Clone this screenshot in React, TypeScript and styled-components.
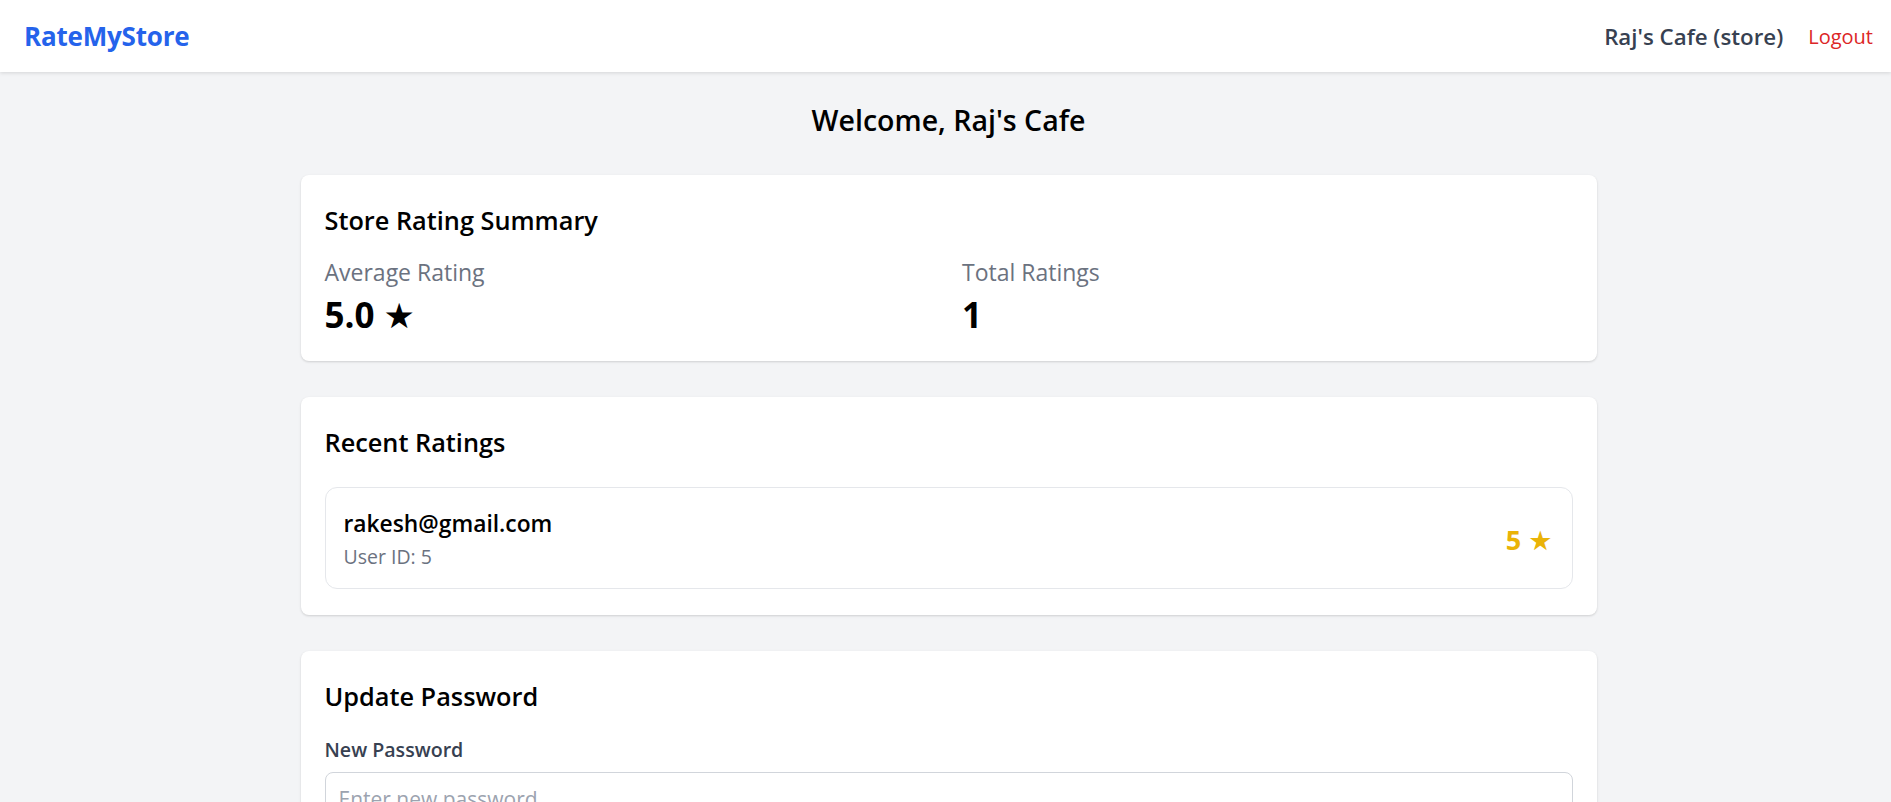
import React from "react";
import styled, { createGlobalStyle } from "styled-components";

const GlobalStyle = createGlobalStyle`
  * { box-sizing: border-box; }
  html, body { margin: 0; padding: 0; background: #f3f4f6; }
  body {
    font-family: "Open Sans", "Noto Sans", "DejaVu Sans", sans-serif;
    color: #000;
    -webkit-font-smoothing: antialiased;
  }
`;

const Nav = styled.header`
  height: 72px;
  background: #ffffff;
  display: flex;
  align-items: center;
  justify-content: space-between;
  padding: 0 18px 0 24px;
  box-shadow: 0 1px 4px rgba(0, 0, 0, 0.13);
  position: relative;
  z-index: 1;
`;

const Logo = styled.div`
  font-size: 26px;
  font-weight: 700;
  color: #2563eb;
  letter-spacing: -0.2px;
`;

const NavRight = styled.div`
  display: flex;
  align-items: center;
  gap: 25px;
`;

const NavUser = styled.span`
  font-size: 22.3px;
  font-weight: 600;
  color: #374151;
`;

const LogoutButton = styled.button`
  border: none;
  background: none;
  padding: 0;
  font-family: inherit;
  font-size: 20px;
  color: #dc2626;
  cursor: pointer;
`;

const Main = styled.main`
  padding: 29px 0 40px 6px;
`;

const PageTitle = styled.h1`
  margin: 0 0 36px;
  text-align: center;
  font-size: 28.5px;
  font-weight: 600;
  line-height: 38px;
  color: #000;
`;

const Container = styled.div`
  width: 1296px;
  margin: 0 auto;
  display: flex;
  flex-direction: column;
  gap: 36px;
`;

const Card = styled.section`
  background: #ffffff;
  border-radius: 8px;
  box-shadow: 0 1px 3px rgba(0, 0, 0, 0.1), 0 1px 2px rgba(0, 0, 0, 0.06);
  padding: 27px 24px 26px;
`;

const CardTitle = styled.h2<{ $gap: number }>`
  margin: 0 0 ${(p) => p.$gap}px;
  font-size: 25.3px;
  font-weight: 600;
  line-height: 36px;
  color: #000;
`;

const StatGrid = styled.div`
  display: grid;
  grid-template-columns: 1fr 1fr;
  column-gap: 27px;
`;

const Stat = styled.div`
  display: flex;
  flex-direction: column;
`;

const StatLabel = styled.span`
  font-size: 23px;
  line-height: 32px;
  color: #6b7280;
`;

const StatValue = styled.span`
  margin-top: 7px;
  font-size: 35px;
  font-weight: 700;
  line-height: 40px;
  color: #000;
`;

const RatingRow = styled.div`
  display: flex;
  align-items: center;
  justify-content: space-between;
  border: 1px solid #e5e7eb;
  border-radius: 12px;
  padding: 20px 19px 18px 18px;
`;

const RaterInfo = styled.div`
  display: flex;
  flex-direction: column;
`;

const RaterEmail = styled.span`
  font-size: 22.8px;
  font-weight: 600;
  line-height: 32px;
  color: #000;
`;

const RaterId = styled.span`
  margin-top: 4px;
  font-size: 19.5px;
  line-height: 26px;
  color: #6b7280;
`;

const RatingValue = styled.span`
  font-size: 27px;
  font-weight: 700;
  color: #eab308;
`;

const FormLabel = styled.label`
  display: block;
  margin-bottom: 9px;
  font-size: 19.6px;
  font-weight: 600;
  line-height: 27px;
  color: #374151;
`;

const TextInput = styled.input`
  display: block;
  width: 100%;
  height: 54px;
  border: 1px solid #d1d5db;
  border-radius: 8px;
  padding: 0 13px;
  font-family: inherit;
  font-size: 21px;
  color: #111827;
  background: #fff;
  outline: none;
  &::placeholder {
    color: #9ca3af;
  }
`;

export default function App() {
  return (
    <>
      <GlobalStyle />
      <Nav>
        <Logo>RateMyStore</Logo>
        <NavRight>
          <NavUser>Raj's Cafe (store)</NavUser>
          <LogoutButton>Logout</LogoutButton>
        </NavRight>
      </Nav>
      <Main>
        <PageTitle>Welcome, Raj's Cafe</PageTitle>
        <Container>
          <Card>
            <CardTitle $gap={18}>Store Rating Summary</CardTitle>
            <StatGrid>
              <Stat>
                <StatLabel>Average Rating</StatLabel>
                <StatValue>5.0 ★</StatValue>
              </Stat>
              <Stat>
                <StatLabel>Total Ratings</StatLabel>
                <StatValue>1</StatValue>
              </Stat>
            </StatGrid>
          </Card>
          <Card>
            <CardTitle $gap={27}>Recent Ratings</CardTitle>
            <RatingRow>
              <RaterInfo>
                <RaterEmail>rakesh@gmail.com</RaterEmail>
                <RaterId>User ID: 5</RaterId>
              </RaterInfo>
              <RatingValue>5 ★</RatingValue>
            </RatingRow>
          </Card>
          <Card>
            <CardTitle $gap={22}>Update Password</CardTitle>
            <FormLabel htmlFor="new-password">New Password</FormLabel>
            <TextInput id="new-password" type="password" placeholder="Enter new password" />
          </Card>
        </Container>
      </Main>
    </>
  );
}
